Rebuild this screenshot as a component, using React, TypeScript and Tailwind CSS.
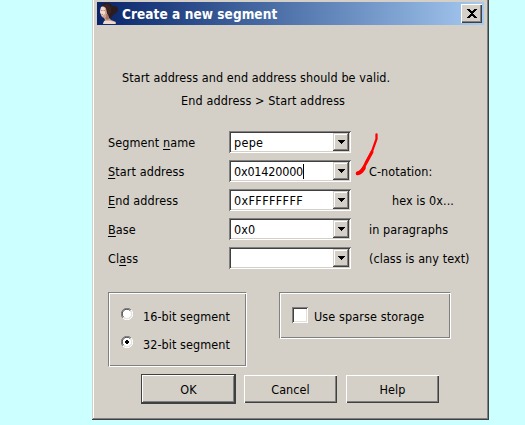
import type { ReactNode } from "react";

const raised =
  "bg-[#d4d0c8] shadow-[inset_1px_1px_0_#fff,inset_-1px_-1px_0_#404040,inset_-2px_-2px_0_#808080]";

function Combo({ value, caret, valueClass = "" }: { value: string; caret?: boolean; valueClass?: string }) {
  return (
    <div className="flex h-[22px] w-[122px] items-center bg-white p-[2px] pl-[5px] shadow-[inset_1px_1px_0_#808080,inset_-1px_-1px_0_#fff,inset_2px_2px_0_#404040,inset_-2px_-2px_0_#d4d0c8]">
      <span className={`flex flex-1 items-center pt-px whitespace-pre ${valueClass}`}>
        {value}
        {caret && <i className="h-[15px] w-px bg-black" />}
      </span>
      <span className="flex h-[18px] w-4 items-center justify-center bg-[#d4d0c8] shadow-[inset_-1px_-1px_0_#404040,inset_1px_1px_0_#d4d0c8,inset_-2px_-2px_0_#808080,inset_2px_2px_0_#fff]">
        <svg width="7" height="4" viewBox="0 0 7 4" shapeRendering="crispEdges">
          <path d="M0 0h7v1H6v1H5v1H4v1H3V3H2V2H1V1H0z" />
        </svg>
      </span>
    </div>
  );
}

function Row({ label, value, note, caret, valueClass, noteClass = "" }: {
  label: ReactNode;
  value: string;
  note?: string;
  caret?: boolean;
  valueClass?: string;
  noteClass?: string;
}) {
  return (
    <div className="flex h-[22px] items-center">
      <label className="w-[121px] pt-px tracking-[0.1px]">{label}</label>
      <Combo value={value} caret={caret} valueClass={valueClass} />
      <span className={`ml-[18px] pt-px ${noteClass}`}>{note}</span>
    </div>
  );
}

function U({ children }: { children: string }) {
  return <span className="underline decoration-1 underline-offset-2">{children}</span>;
}

function Radio({ label, checked }: { label: string; checked?: boolean }) {
  return (
    <div className="flex h-3 items-center">
      <svg width="12" height="12" viewBox="0 0 12 12">
        <circle cx="6" cy="6" r="5" fill="#fff" />
        <path d="M1.9 10.1A5.5 5.5 0 0 1 10.1 1.9" fill="none" stroke="#808080" />
        <path d="M2.6 9.2A4.5 4.5 0 0 1 9.2 2.6" fill="none" stroke="#404040" />
        <path d="M10.1 1.9A5.5 5.5 0 0 1 1.9 10.1" fill="none" stroke="#fff" />
        <path d="M9.2 2.8A4.5 4.5 0 0 1 2.8 9.2" fill="none" stroke="#e4e1dc" />
        {checked && <path d="M5 4h2v1h1v2H7v1H5V7H4V5h1z" shapeRendering="crispEdges" />}
      </svg>
      <span className="ml-[10px] pt-[5px]">{label}</span>
    </div>
  );
}

function Portrait() {
  return (
    <svg width="20" height="21" viewBox="0 0 20 21">
      <path d="M3 4Q4 0 9 0Q13 0 14 3Q19 2 20 6Q20 10 16 11L13 15L9 14Z" fill="#2b1c1f" />
      <path d="M3 4Q6 2 8 5L9 10L11 15L13 17L18 19V21H5L7 17L6 15L4 14L3 12L2 9Z" fill="#cda492" />
      <path d="M3 4Q6 3 7 6L7 11L4 13L3 11L2 9Z" fill="#f0d8cc" />
      <path d="M3 7.500h1.500M5.500 7.500H7M3.500 11.500H5" stroke="#a87a6d" strokeWidth="0.800" />
      <path d="M8 11Q9 14 7 15L9 17L11 16L10 11Z" fill="#a8755f" />
      <path d="M6 18Q11 17 17 19V21H5Z" fill="#ecd9cf" />
      <path d="M4 3Q8 3 9 7L10 12L13 10V4L9 1Z" fill="#3a2523" />
    </svg>
  );
}

export default function App() {
  return (
    <div className="h-[425px] w-[525px] overflow-hidden bg-[#ccffff] pl-[92px] text-[12.5px] leading-4 tracking-[0.07px] whitespace-nowrap text-black [font-family:'DejaVu_Sans_Condensed','DejaVu_Sans',sans-serif]">
      <main className="relative flex h-[420px] w-[397px] flex-col bg-[#d4d0c8] px-[5px] pt-[2px] shadow-[inset_-1px_-1px_0_#404040,inset_1px_0_0_#d4d0c8,inset_-2px_-2px_0_#808080,inset_2px_0_0_#fff]">
        <header className="flex h-[23px] w-[387px] items-center bg-linear-to-r from-[#0a246a] to-[#a6caf0] pr-[2px] pl-px">
          <Portrait />
          <h1 className="ml-1 flex-1 pt-px text-[13.5px] font-bold tracking-[0.07px] text-white">Create a new segment</h1>
          <button className={`flex h-[19px] w-[21px] items-center justify-center ${raised}`}>
            <svg width="10" height="9" viewBox="0 0 10 9" shapeRendering="crispEdges">
              <path d="M0 0h3v1h1v1h2V1h1V0h3v1H9v1H8v1H7v1H6v1h1v1h1v1h1v1h1v1H7V8H6V7H4v1H3v1H0V8h1V7h1V6h1V5h1V4H3V3H2V2H1V1H0z" />
            </svg>
          </button>
        </header>

        <div className="mt-[44px] pl-[25px]">
          <p className="h-[23px] pt-px">Start address and end address should be valid.</p>
          <p className="h-[23px] pt-px pl-[59px] tracking-[0.12px]">End address &gt; Start address</p>
        </div>

        <section className="mt-[16px] flex flex-col gap-[7px] pl-[11px]">
          <Row label={<>Segment <U>n</U>ame</>} value="pepe" valueClass="tracking-[0.3px]" />
          <Row label={<><U>S</U>tart address</>} value="0x01420000" valueClass="tracking-[-0.2px]" caret note="C-notation:" />
          <Row label={<><U>E</U>nd address</>} value="0xFFFFFFFF" valueClass="tracking-[0.35px]" note="hex is 0x..." noteClass="pl-[23px]" />
          <Row label={<><U>B</U>ase</>} value="0x0" note="in paragraphs" />
          <Row label={<>Cl<U>a</U>ss</>} value="" note="(class is any text)" />
        </section>

        <section className="mt-[23px] flex items-start gap-8 pl-[11px]">
          <div className="flex h-[75px] w-[139px] flex-col gap-4 border border-r-white border-b-white border-t-[#808080] border-l-[#808080] pt-[15px] pl-3 shadow-[inset_1px_1px_0_#fff,inset_-1px_-1px_0_#808080]">
            <Radio label="16-bit segment" />
            <Radio label="32-bit segment" checked />
          </div>
          <div className="flex h-[47px] w-[172px] items-start border border-r-white border-b-white border-t-[#808080] border-l-[#808080] pt-[14px] pl-3 shadow-[inset_1px_1px_0_#fff,inset_-1px_-1px_0_#808080]">
            <span className="size-4 bg-white shadow-[inset_1px_1px_0_#808080,inset_-1px_-1px_0_#fff,inset_2px_2px_0_#404040,inset_-2px_-2px_0_#e4dfd8]" />
            <span className="ml-[6px] pt-[2px] tracking-[0.12px]">Use sparse storage</span>
          </div>
        </section>

        <footer className="mt-[7px] flex items-center pl-[44px]">
          <button className="h-[30px] w-[95px] bg-[#d4d0c8] pt-px shadow-[inset_0_0_0_1px_#404040,inset_-2px_-2px_0_#404040,inset_2px_2px_0_#fff,inset_-3px_-3px_0_#808080]">OK</button>
          <button className={`ml-2 h-7 w-[93px] pt-px ${raised}`}>Cancel</button>
          <button className={`ml-[9px] h-7 w-[93px] pt-px ${raised}`}>Help</button>
        </footer>

        <svg className="absolute top-[130px] left-[260px]" width="30" height="48" viewBox="0 0 30 48" fill="none" stroke="#f00" strokeLinecap="round">
          <path d="M24.5 4.500V9Q21 21 14.500 32" strokeWidth="2.300" />
          <path d="M20 22L14 33Q10 42 5.500 43" strokeWidth="3" />
          <path d="M12 38Q9 43 5.500 43.500" strokeWidth="3.600" />
        </svg>
      </main>
    </div>
  );
}
